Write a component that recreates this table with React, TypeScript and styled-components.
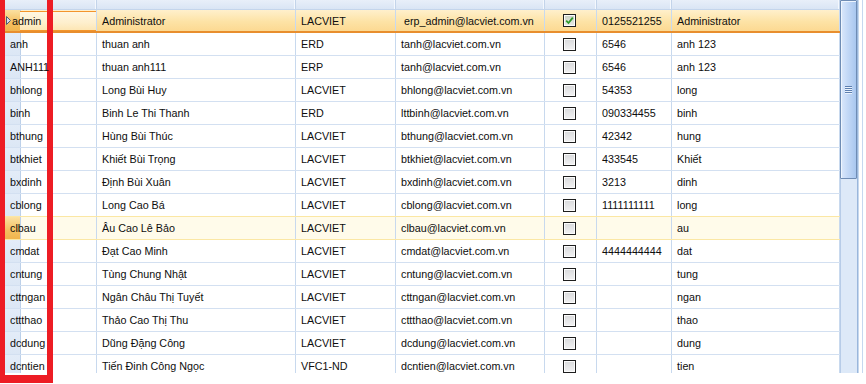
import React from 'react';
import styled, { createGlobalStyle, css } from 'styled-components';

// column widths of the users grid (login, full name, group, email, active, phone, note)
const COLS = '97px 199px 100px 149px 52px 75px 168px';

type User = {
  login: string;
  name: string;
  group: string;
  email: string;
  active?: boolean;
  phone: string;
  note: string;
};

const users: User[] = [
  { login: 'admin', name: 'Administrator', group: 'LACVIET', email: ' erp_admin@lacviet.com.vn', active: true, phone: '0125521255', note: 'Administrator' },
  { login: 'anh', name: 'thuan anh', group: 'ERD', email: 'tanh@lacviet.com.vn', phone: '6546', note: 'anh 123' },
  { login: 'ANH111', name: 'thuan anh111', group: 'ERP', email: 'tanh@lacviet.com.vn', phone: '6546', note: 'anh 123' },
  { login: 'bhlong', name: 'Long Bùi Huy', group: 'LACVIET', email: 'bhlong@lacviet.com.vn', phone: '54353', note: 'long' },
  { login: 'binh', name: 'Binh Le Thi Thanh', group: 'ERD', email: 'lttbinh@lacviet.com.vn', phone: '090334455', note: 'binh' },
  { login: 'bthung', name: 'Hùng Bùi Thúc', group: 'LACVIET', email: 'bthung@lacviet.com.vn', phone: '42342', note: 'hung' },
  { login: 'btkhiet', name: 'Khiết Bùi Trọng', group: 'LACVIET', email: 'btkhiet@lacviet.com.vn', phone: '433545', note: 'Khiết' },
  { login: 'bxdinh', name: 'Định Bùi Xuân', group: 'LACVIET', email: 'bxdinh@lacviet.com.vn', phone: '3213', note: 'dinh' },
  { login: 'cblong', name: 'Long Cao Bá', group: 'LACVIET', email: 'cblong@lacviet.com.vn', phone: '1111111111', note: 'long' },
  { login: 'clbau', name: 'Âu Cao Lê Bảo', group: 'LACVIET', email: 'clbau@lacviet.com.vn', phone: '', note: 'au' },
  { login: 'cmdat', name: 'Đạt Cao Minh', group: 'LACVIET', email: 'cmdat@lacviet.com.vn', phone: '4444444444', note: 'dat' },
  { login: 'cntung', name: 'Tùng Chung Nhật', group: 'LACVIET', email: 'cntung@lacviet.com.vn', phone: '', note: 'tung' },
  { login: 'cttngan', name: 'Ngân Châu Thị Tuyết', group: 'LACVIET', email: 'cttngan@lacviet.com.vn', phone: '', note: 'ngan' },
  { login: 'cttthao', name: 'Thảo Cao Thị Thu', group: 'LACVIET', email: 'cttthao@lacviet.com.vn', phone: '', note: 'thao' },
  { login: 'dcdung', name: 'Dũng Đặng Công', group: 'LACVIET', email: 'dcdung@lacviet.com.vn', phone: '', note: 'dung' },
  { login: 'dcntien', name: 'Tiến Đinh Công Ngọc', group: 'VFC1-ND', email: 'dcntien@lacviet.com.vn', phone: '', note: 'tien' },
];

const SELECTED = 0;
const HOT = 9;

const GlobalStyle = createGlobalStyle`
  html, body {
    margin: 0;
    padding: 0;
    background: #fff;
  }
  body {
    font-family: "Liberation Sans", Arial, sans-serif;
    font-size: 10.75px;
    color: #0e0e0e;
  }
`;

const App = () => {
  return (
    <>
      <GlobalStyle />
      <Screen>
        <Frame>
          <Grid>
            <HeaderStrip>
              {Array.from({ length: 7 }).map((_, i) => (
                <HeaderCell key={i} />
              ))}
            </HeaderStrip>
            {users.map((u, id) => {
              const state = id === SELECTED ? 'selected' : id === HOT ? 'hot' : 'normal';
              return (
                <Row key={id} $state={state}>
                  <FirstCell $state={state}>
                    {state === 'selected' && (
                      <Arrow width="5" height="9" viewBox="0 0 5 9">
                        <polygon points="0.5,0.5 4.5,4.5 0.5,8.5" fill="#d3deec" stroke="#4c5c76" strokeWidth="1" />
                      </Arrow>
                    )}
                    <CellText>{u.login}</CellText>
                  </FirstCell>
                  <Cell>{u.name}</Cell>
                  <Cell>{u.group}</Cell>
                  <Cell>{u.email}</Cell>
                  <CheckCell>
                    <Check $checked={!!u.active}>
                      {u.active && (
                        <svg width="9" height="9" viewBox="0 0 9 9">
                          <path d="M1.2 4.6 L3.5 7 L7.8 1.6" fill="none" stroke="#2e9a2a" strokeWidth="1.8" />
                        </svg>
                      )}
                    </Check>
                  </CheckCell>
                  <Cell>{u.phone}</Cell>
                  <Cell>{u.note}</Cell>
                </Row>
              );
            })}
          </Grid>
          <ScrollBar>
            <Thumb>
              <Grip />
              <Grip />
              <Grip />
              <Grip />
            </Thumb>
          </ScrollBar>
          <EdgeLines />
        </Frame>
        <Annotation />
      </Screen>
    </>
  );
};

export default App;

const Screen = styled.div`
  position: relative;
  width: 866px;
  height: 384px;
  overflow: hidden;
  background: #fff;
`;

const Frame = styled.div`
  display: flex;
  height: 373px;
`;

const Grid = styled.div`
  width: 840px;
  overflow: hidden;
  background: #fff;
`;

const HeaderStrip = styled.div`
  display: grid;
  grid-template-columns: ${COLS};
  height: 10px;
  box-sizing: border-box;
  background: linear-gradient(#e8eff9, #dae5f4);
  border-bottom: 1px solid #c4d5eb;
`;

const HeaderCell = styled.div`
  border-right: 1px solid #c3d4ea;
  box-shadow: inset -1px 0 0 #f4f8fd;
`;

type RowState = 'selected' | 'hot' | 'normal';

const Row = styled.div<{ $state: RowState }>`
  display: grid;
  grid-template-columns: ${COLS};
  height: 23px;
  box-sizing: border-box;
  border-bottom: 1px solid #d3e0f1;
  ${(p) =>
    p.$state === 'selected' &&
    css`
      background: linear-gradient(#fff0cc, #fde3a6 55%, #fcd992);
      border-bottom: 2px solid #e88e2e;
    `}
  ${(p) =>
    p.$state === 'hot' &&
    css`
      background: #fffbea;
      border-bottom-color: #fbe7a4;
      box-shadow: 0 -1px 0 #fbe7a4;
    `}
`;

const Cell = styled.div`
  display: flex;
  align-items: center;
  padding-left: 5px;
  border-right: 1px solid #c8d9ee;
  white-space: pre;
  overflow: hidden;
  min-width: 0;
`;

const indicatorFill = (state: RowState) =>
  state === 'normal' ? 'linear-gradient(#e3ecf8, #dce7f5)' : 'linear-gradient(#fbe1a2, #f4c061 60%, #f1b44d)';

const FirstCell = styled(Cell)<{ $state: RowState }>`
  position: relative;
  padding-left: ${(p) => (p.$state === 'selected' ? '6px' : '10px')};
  background-image: ${(p) => indicatorFill(p.$state)}, linear-gradient(#bcd0e9, #bcd0e9);
  background-size: 20px 100%, 1px 100%;
  background-position: 0 0, 20px 0;
  background-repeat: no-repeat;
  ${(p) =>
    p.$state === 'selected' &&
    css`
      &::after {
        content: '';
        position: absolute;
        left: 20px;
        top: 1px;
        right: -1px;
        bottom: 0;
        border: 1px solid #f3952c;
        border-left: none;
        background: linear-gradient(#fff7e3, #feefcd 60%, #fde6b4);
      }
    `}
`;

const CellText = styled.span`
  position: relative;
  z-index: 1;
`;

const Arrow = styled.svg`
  position: relative;
  z-index: 1;
  flex: none;
  margin-right: 1px;
`;

const CheckCell = styled(Cell)`
  justify-content: center;
  padding-left: 0;
  padding-right: 3px;
`;

const Check = styled.span<{ $checked: boolean }>`
  width: 13px;
  height: 13px;
  box-sizing: border-box;
  display: flex;
  align-items: center;
  justify-content: center;
  border: 1px solid #1e1e1e;
  box-shadow: inset 0 0 0 1px #fbfbfb;
  background: ${(p) => (p.$checked ? 'linear-gradient(#c9cfc3, #e9ece6)' : 'linear-gradient(#d9dadc, #f1f1f2)')};
`;

const ScrollBar = styled.div`
  width: 17px;
  flex: none;
  box-sizing: border-box;
  background: #dde9f8;
  border-left: 1px solid #b7cce8;
`;

const Thumb = styled.div`
  height: 179px;
  box-sizing: border-box;
  margin-left: -1px;
  border: 1px solid #6f8cb4;
  border-radius: 1px;
  background: linear-gradient(to right, #dbe8fb, #c3d8f6 45%, #a9c7ef);
  box-shadow: inset 1px 1px 0 #eef5fe;
  display: flex;
  flex-direction: column;
  align-items: center;
  justify-content: center;
  gap: 1px;
`;

const Grip = styled.span`
  width: 7px;
  height: 1px;
  background: #5d7fb0;
  box-shadow: 0 1px 0 #eaf2fd;
`;

const EdgeLines = styled.div`
  width: 9px;
  flex: none;
  background: linear-gradient(
    to right,
    #9ab7dc 0 1px,
    #c6d8ee 1px 2px,
    #fff 2px 5px,
    #c6d8ef 5px 6px,
    #fff 6px
  );
`;

const Annotation = styled.div`
  position: absolute;
  left: 0;
  top: -10px;
  width: 53px;
  height: 393px;
  box-sizing: border-box;
  border: solid #ed1c24;
  border-width: 0 6px 8px 5px;
  pointer-events: none;
`;
